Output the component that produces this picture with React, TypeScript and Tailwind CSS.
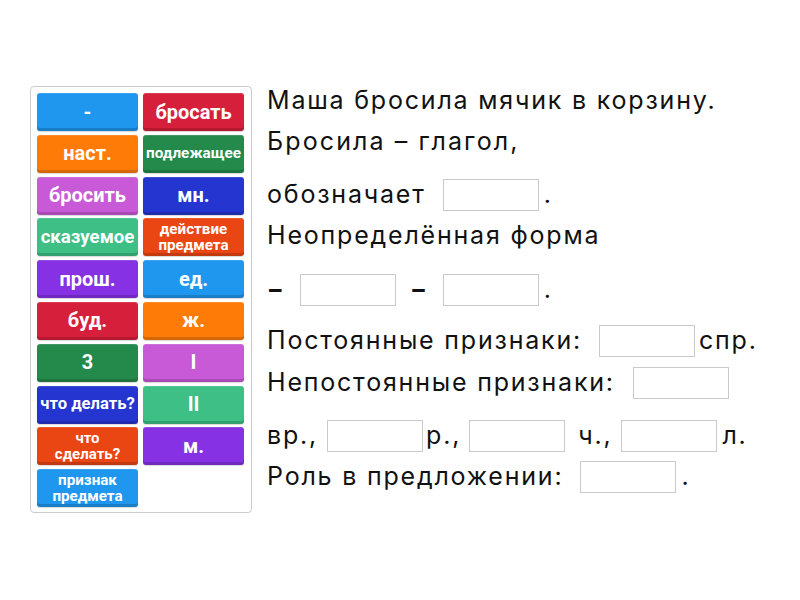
import React from "react";

type Tile = { t: string; c: string; s: number; lh?: number };

const C = {
  blue: "bg-[#1f97ee]",
  red: "bg-[#d61f3b]",
  orange: "bg-[#ff7b07]",
  green: "bg-[#248a4c]",
  magenta: "bg-[#c95ad7]",
  navy: "bg-[#2535d0]",
  teal: "bg-[#3dbf86]",
  orangered: "bg-[#ea4613]",
  purple: "bg-[#8631e4]",
};

const tiles: Tile[] = [
  { t: "-", c: C.blue, s: 20 },
  { t: "бросать", c: C.red, s: 20 },
  { t: "наст.", c: C.orange, s: 20 },
  { t: "подлежащее", c: C.green, s: 15.3 },
  { t: "бросить", c: C.magenta, s: 20 },
  { t: "мн.", c: C.navy, s: 20 },
  { t: "сказуемое", c: C.teal, s: 18.6 },
  { t: "действие\nпредмета", c: C.orangered, s: 15.2, lh: 16 },
  { t: "прош.", c: C.purple, s: 20 },
  { t: "ед.", c: C.blue, s: 20 },
  { t: "буд.", c: C.red, s: 20 },
  { t: "ж.", c: C.orange, s: 20 },
  { t: "3", c: C.green, s: 20 },
  { t: "I", c: C.magenta, s: 20 },
  { t: "что делать?", c: C.navy, s: 16.6 },
  { t: "II", c: C.teal, s: 20 },
  { t: "что\nсделать?", c: C.orangered, s: 15, lh: 16 },
  { t: "м.", c: C.purple, s: 20 },
  { t: "признак\nпредмета", c: C.blue, s: 15.2, lh: 16 },
];

function TileView({ tile }: { tile: Tile }) {
  return (
    <div
      className={`${tile.c} h-[38px] rounded-[3px] flex items-center justify-center text-white font-bold text-center whitespace-pre-line shadow-[inset_0_-3px_0_rgba(0,0,0,0.16),inset_0_1px_0_rgba(255,255,255,0.12),0_1px_1px_rgba(0,0,0,0.15)]`}
      style={{ fontSize: tile.s, lineHeight: tile.lh ? `${tile.lh}px` : "1" }}
    >
      <span className="-mt-[1px]">{tile.t}</span>
    </div>
  );
}

function Box({ className = "" }: { className?: string }) {
  return <span className={`inline-block w-[96px] h-[32px] border border-[#cacaca] bg-white shrink-0 ${className}`} />;
}

export default function App() {
  return (
    <div
      className="w-[800px] h-[600px] bg-white text-[#111]"
      style={{ fontFamily: "Inter, 'Noto Sans', sans-serif" }}
    >
      <div className="flex items-start pt-[80px] pl-[30px]">
        <div
          className="mt-[6px] w-[222px] h-[427px] border border-[#cbcbcb] rounded-[4px] pt-[6px] pl-[6px] pr-[7px] grid grid-cols-2 gap-x-[5px] gap-y-[3.8px] content-start"
          style={{ fontFamily: "Roboto, 'Liberation Sans', sans-serif" }}
        >
          {tiles.map((t, i) => (
            <TileView key={i} tile={t} />
          ))}
        </div>

        <div className="ml-[15px] flex flex-col text-[25px] leading-none tracking-[1.8px] whitespace-nowrap">
          <div className="h-[41px] flex items-center">Маша бросила мячик в корзину.</div>
          <div className="h-[41px] flex items-center tracking-[2.1px]">Бросила – глагол,</div>
          <div className="h-[41px] mt-[12px] flex items-center">
            <span>обозначает</span>
            <Box className="ml-[17px]" />
            <span className="ml-[5px]">.</span>
          </div>
          <div className="h-[41px] flex items-center">Неопределённая форма</div>
          <div className="h-[41px] mt-[13px] flex items-center">
            <span className="ml-[2px] font-bold">–</span>
            <Box className="ml-[17px]" />
            <span className="ml-[16px] font-bold">–</span>
            <Box className="ml-[16px]" />
            <span className="ml-[5px]">.</span>
          </div>
          <div className="h-[41px] mt-[10px] flex items-center">
            <span>Постоянные признаки:</span>
            <Box className="ml-[17px]" />
            <span className="ml-[4px]">спр.</span>
          </div>
          <div className="h-[41px] mt-[1px] flex items-center">
            <span>Непостоянные признаки:</span>
            <Box className="ml-[18px]" />
          </div>
          <div className="h-[41px] mt-[12px] flex items-center">
            <span>вр.,</span>
            <Box className="ml-[9px]" />
            <span className="ml-[3px]">р.,</span>
            <Box className="ml-[8px]" />
            <span className="ml-[13px]">ч.,</span>
            <Box className="ml-[9px]" />
            <span className="ml-[5px]">л.</span>
          </div>
          <div className="h-[41px] flex items-center">
            <span>Роль в предложении:</span>
            <Box className="ml-[17px]" />
            <span className="ml-[5px]">.</span>
          </div>
        </div>
      </div>
    </div>
  );
}
